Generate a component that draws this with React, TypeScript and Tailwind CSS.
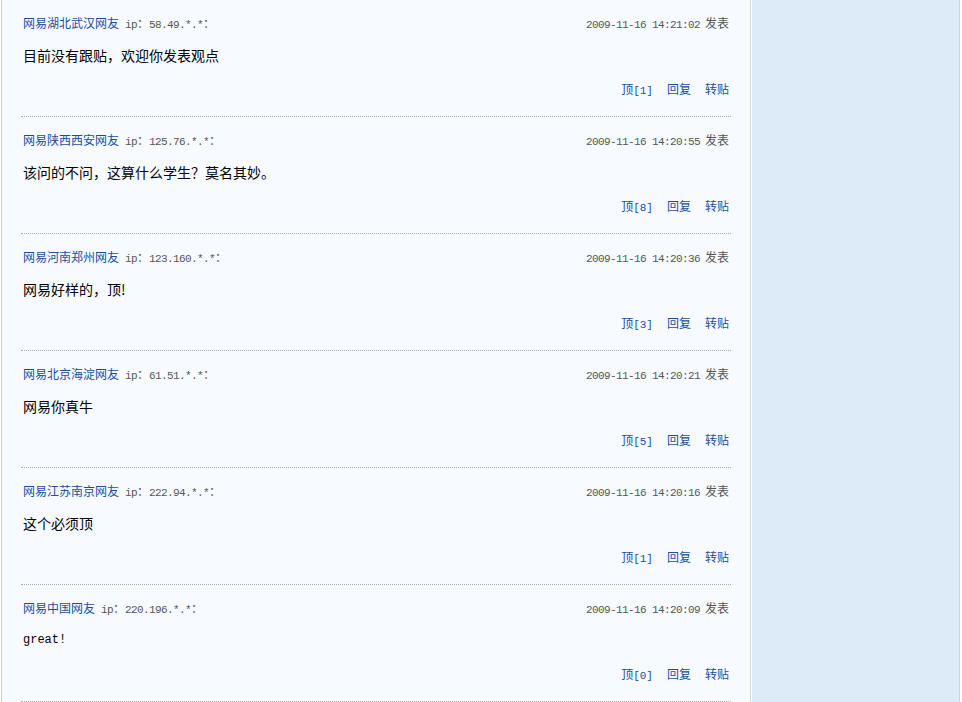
import React from "react";

const posts = [
  { name: "网易湖北武汉网友", ip: "58.49.*.*", time: "2009-11-16 14:21:02", text: "目前没有跟贴，欢迎你发表观点", top: 1 },
  { name: "网易陕西西安网友", ip: "125.76.*.*", time: "2009-11-16 14:20:55", text: "该问的不问，这算什么学生？莫名其妙。", top: 8 },
  { name: "网易河南郑州网友", ip: "123.160.*.*", time: "2009-11-16 14:20:36", text: "网易好样的，顶!", top: 3 },
  { name: "网易北京海淀网友", ip: "61.51.*.*", time: "2009-11-16 14:20:21", text: "网易你真牛", top: 5 },
  { name: "网易江苏南京网友", ip: "222.94.*.*", time: "2009-11-16 14:20:16", text: "这个必须顶", top: 1 },
  { name: "网易中国网友", ip: "220.196.*.*", time: "2009-11-16 14:20:09", text: "great!", top: 0, mono: true },
];

const cjk = "font-['Noto_Sans_CJK_SC','Noto_Sans',sans-serif]";
const mono = "font-['Liberation_Mono','Noto_Sans_CJK_SC',monospace]";

export default function App() {
  return (
    <div className="h-[702px] w-[962px] overflow-hidden bg-white flex">
      <div className="w-[1px] bg-white" />
      <div className="flex w-[750px] border-l border-[#cfcfcf] border-r bg-[#f7fbff] border-r-[#d4d8dc]">
        <div className="w-[19px] shrink-0" />
        <div className="w-[710px] shrink-0">
          {posts.map((p, i) => (
            <div key={i} className="h-[117px] border-b border-dotted border-[#a8a8a8] px-[2px] pt-[14px]">
              <div className="flex h-[18px] items-baseline justify-between">
                <div className="flex items-baseline">
                  <span className={`${cjk} text-[12px] leading-[18px] text-[#1b4c9e]`}>{p.name}</span>
                  <span className={`${mono} ml-[6px] text-[11px] tracking-[-0.6px] leading-[18px] text-[#555]`}>
                    ip<span className={`${cjk} text-[12px] tracking-normal`}>：</span>
                    {p.ip}
                    <span className={`${cjk} text-[12px] tracking-normal`}>：</span>
                  </span>
                </div>
                <div className="flex items-baseline">
                  <span className={`${mono} text-[11px] tracking-[-0.6px] leading-[18px] text-[#555]`}>{p.time}</span>
                  <span className={`${cjk} ml-[5px] text-[12px] leading-[18px] text-[#555]`}>发表</span>
                </div>
              </div>
              <div
                className={`mt-[12px] h-[22px] leading-[22px] text-black ${
                  p.mono ? `${mono} text-[12px]` : `${cjk} text-[14px]`
                }`}
              >
                {p.text}
              </div>
              <div className="mt-[14px] flex h-[18px] items-baseline justify-end gap-[14px] text-[12px] leading-[18px] text-[#1b4c9e]">
                <span className={cjk}>
                  顶<span className={`${mono} text-[11px]`}>[{p.top}]</span>
                </span>
                <span className={cjk}>回复</span>
                <span className={cjk}>转贴</span>
              </div>
            </div>
          ))}
        </div>
        <div className="flex-1" />
      </div>
      <div className="w-[1px] bg-white" />
      <div className="w-[208px] bg-[#ddebf8] border-r border-[#cdd3d9]" />
      <div className="flex-1 bg-white" />
    </div>
  );
}
